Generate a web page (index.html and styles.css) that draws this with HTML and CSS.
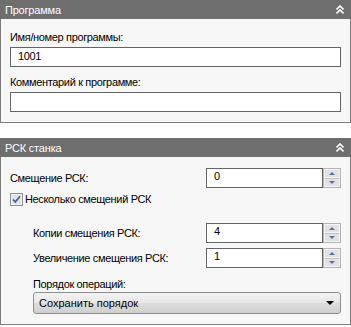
FILE: index.html
```html
<!DOCTYPE html>
<html>
<head>
    <meta charset="utf-8" />
    <title>Программа</title>
    <link rel="stylesheet" href="styles.css">
</head>
<body>
    <div class="panel">
        <div class="panel-header">
            <span>Программа</span>
            <svg class="collapse" width="8" height="10" viewBox="0 0 8 10"><path d="M0.5 4.5 L4 1 L7.5 4.5 M0.5 8.5 L4 5 L7.5 8.5" fill="none" stroke="#fff" stroke-width="1.6"/></svg>
        </div>
        <div class="panel-body">
            <div class="label">Имя/номер программы:</div>
            <div class="textbox">1001</div>
            <div class="label gap">Комментарий к программе:</div>
            <div class="textbox"></div>
        </div>
    </div>

    <div class="panel second">
        <div class="panel-header">
            <span>РСК станка</span>
            <svg class="collapse" width="8" height="10" viewBox="0 0 8 10"><path d="M0.5 4.5 L4 1 L7.5 4.5 M0.5 8.5 L4 5 L7.5 8.5" fill="none" stroke="#fff" stroke-width="1.6"/></svg>
        </div>
        <div class="panel-body">
            <div class="field-row first">
                <div class="label">Смещение РСК:</div>
                <div class="spin">
                    <div class="spin-value">0</div>
                    <div class="spin-buttons">
                        <div class="spin-btn"><span class="tri-up"></span></div>
                        <div class="spin-btn"><span class="tri-down"></span></div>
                    </div>
                </div>
            </div>
            <div class="check-row">
                <svg class="checkbox" width="13" height="13" viewBox="0 0 13 13">
                    <rect x="0.5" y="0.5" width="12" height="12" fill="#f4f4f4" stroke="#8e8f8f"/>
                    <rect x="2" y="2" width="9" height="9" fill="#dfe3ea"/>
                    <path d="M3 6.5 L5.3 9 L10 3.2" fill="none" stroke="#4a5b96" stroke-width="1.7"/>
                </svg>
                <span>Несколько смещений РСК</span>
            </div>
            <div class="field-row indent copies">
                <div class="label">Копии смещения РСК:</div>
                <div class="spin">
                    <div class="spin-value">4</div>
                    <div class="spin-buttons">
                        <div class="spin-btn"><span class="tri-up"></span></div>
                        <div class="spin-btn"><span class="tri-down"></span></div>
                    </div>
                </div>
            </div>
            <div class="field-row indent step">
                <div class="label">Увеличение смещения РСК:</div>
                <div class="spin">
                    <div class="spin-value">1</div>
                    <div class="spin-buttons">
                        <div class="spin-btn"><span class="tri-up"></span></div>
                        <div class="spin-btn"><span class="tri-down"></span></div>
                    </div>
                </div>
            </div>
            <div class="indent-block">
                <div class="label order">Порядок операций:</div>
                <div class="dropdown">
                    <span>Сохранить порядок</span>
                    <span class="tri-drop"></span>
                </div>
            </div>
        </div>
    </div>
</body>
</html>
```

FILE: styles.css
```css
body {
	margin: 0;
	background: #ffffff;
	font-family: "Liberation Sans", Arial, sans-serif;
	font-size: 11px;
	letter-spacing: -0.35px;
	color: #000000;
}

.panel-header {
	display: flex;
	align-items: center;
	justify-content: space-between;
	height: 19px;
	padding: 0 7px 0 5px;
	background: #6e6e6e;
	color: #ffffff;
	font-size: 11px;
	letter-spacing: -0.2px;
}

.panel-body {
	background: #f7f7f7;
	border: 1px solid #7d7d7d;
	border-top: none;
	padding: 10px 9px 10px 9px;
}

.second {
	margin-top: 15px;
}

.label {
	line-height: 16px;
	height: 16px;
}

.label.gap {
	margin-top: 7px;
}

.textbox {
	margin-top: 2px;
	height: 18px;
	line-height: 17px;
	border: 1px solid #646464;
	background: #ffffff;
	padding: 0 7px;
}

/* rows in second panel */
.second .panel-body {
	padding-top: 11px;
	padding-bottom: 10px;
}

.field-row {
	display: flex;
	align-items: center;
	height: 20px;
}

.field-row .label {
	flex: 1;
}

.indent {
	padding-left: 23px;
}

.copies {
	margin-top: 17px;
}

.step {
	margin-top: 5px;
}

.spin {
	display: flex;
	width: 135px;
	height: 20px;
}

.spin-value {
	flex: 1;
	border: 1px solid #646464;
	background: #ffffff;
	padding: 0 7px;
	line-height: 15px;
}

.spin-buttons {
	width: 16px;
	border: 1px solid #b4b4b4;
	display: flex;
	flex-direction: column;
	background: #e9e9e9;
}

.spin-btn {
	flex: 1;
	display: flex;
	align-items: center;
	justify-content: center;
	border: 1px solid #f4f4f4;
	background: #e2e2e2;
}

.spin-btn + .spin-btn {
	border-top: 1px solid #c4c4c4;
}

.tri-up {
	width: 0;
	height: 0;
	border-left: 3px solid transparent;
	border-right: 3px solid transparent;
	border-bottom: 3px solid #5872a6;
}

.tri-down {
	width: 0;
	height: 0;
	border-left: 3px solid transparent;
	border-right: 3px solid transparent;
	border-top: 3px solid #5872a6;
}

.check-row {
	display: flex;
	align-items: center;
	margin-top: 5px;
	height: 13px;
	line-height: 13px;
}

.checkbox {
	margin-right: 2px;
}

.indent-block {
	padding-left: 23px;
}

.label.order {
	margin-top: 8px;
}

.dropdown {
	margin-top: 0;
	height: 20px;
	display: flex;
	align-items: center;
	justify-content: space-between;
	padding: 0 6px 0 5px;
	border: 1px solid #8e8f8f;
	border-radius: 3px;
	background: linear-gradient(#f3f3f3, #e6e6e6 50%, #dddddd 51%, #cfcfcf);
	font-size: 11px;
	letter-spacing: 0;
}

.tri-drop {
	width: 0;
	height: 0;
	border-left: 4px solid transparent;
	border-right: 4px solid transparent;
	border-top: 4px solid #000000;
}
```
